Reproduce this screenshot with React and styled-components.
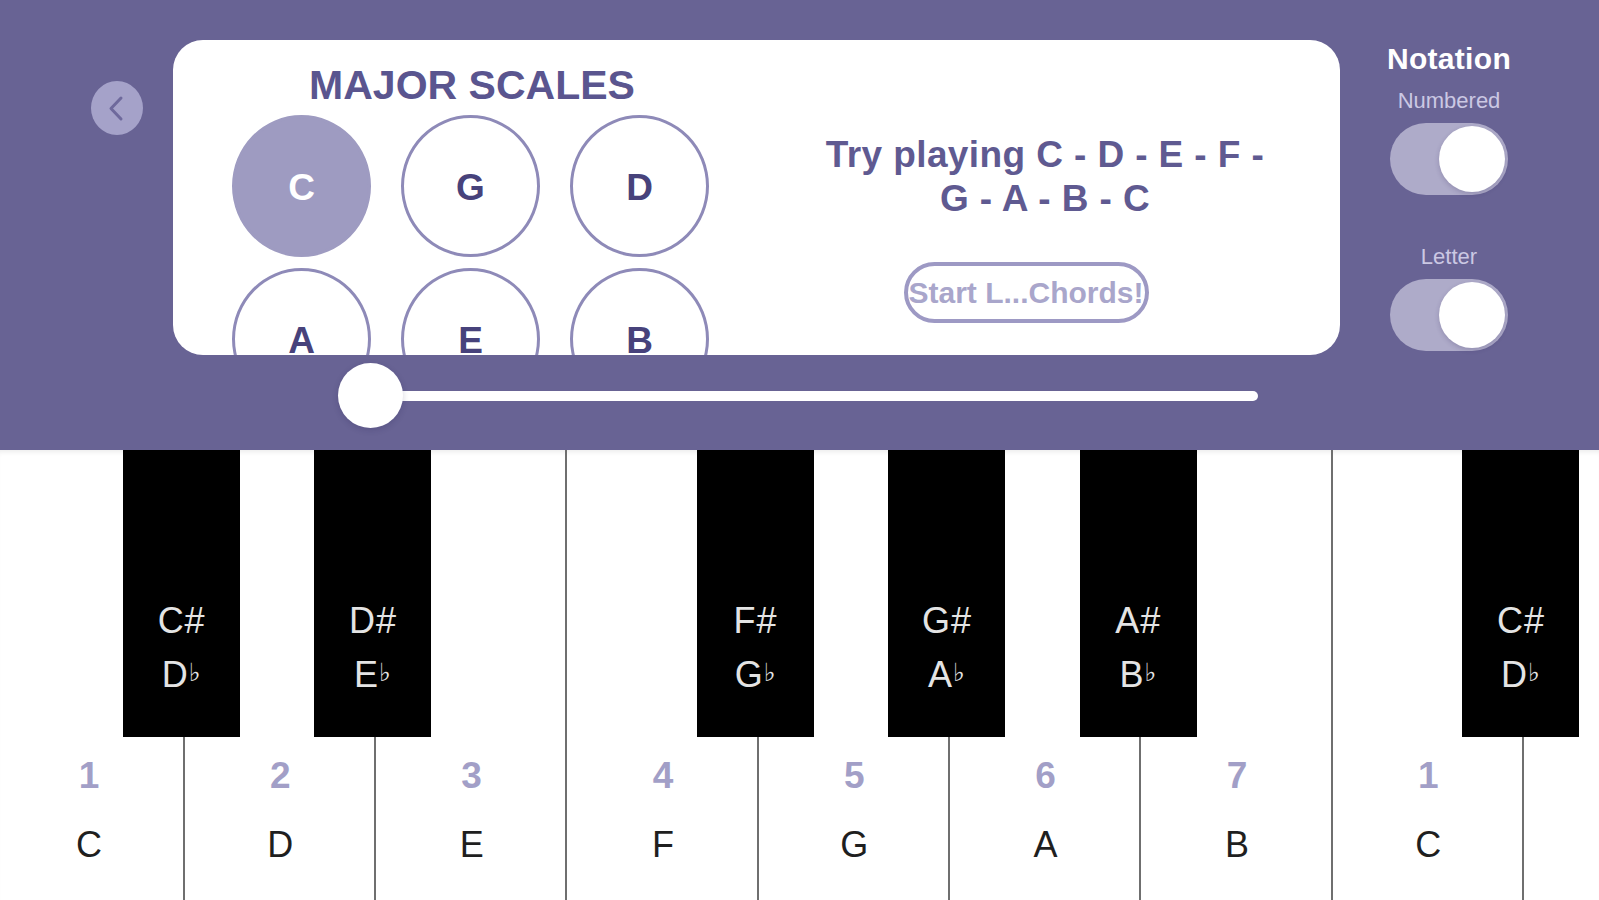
import React from "react";
import styled, { createGlobalStyle } from "styled-components";

const GlobalStyle = createGlobalStyle`
  html, body { margin: 0; padding: 0; }
  body {
    width: 1599px;
    height: 900px;
    overflow: hidden;
    font-family: "Liberation Sans", Arial, sans-serif;
    background: #ffffff;
  }
  * { box-sizing: border-box; }
`;

const Page = styled.div`
  width: 1599px;
  height: 900px;
  display: flex;
  flex-direction: column;
`;

const Header = styled.header`
  height: 450px;
  flex: 0 0 450px;
  background: #686394;
  display: flex;
  flex-direction: column;
`;

const TopRow = styled.div`
  display: flex;
  align-items: flex-start;
  padding-top: 40px;
`;

const LeftRail = styled.div`
  width: 173px;
  flex: 0 0 173px;
  padding: 41px 0 0 91px;
`;

const BackButton = styled.button`
  width: 52px;
  height: 54px;
  border-radius: 50%;
  border: none;
  padding: 0;
  background: #a5a2c9;
  display: flex;
  align-items: center;
  justify-content: center;
`;

const Card = styled.section`
  width: 1167px;
  height: 315px;
  flex: 0 0 1167px;
  background: #ffffff;
  border-radius: 30px;
  overflow: hidden;
  display: flex;
`;

const ScalesPane = styled.div`
  width: 539px;
  flex: 0 0 539px;
  padding: 22px 0 0 59px;
  display: flex;
  flex-direction: column;
  align-items: flex-start;
`;

const ScalesTitle = styled.h1`
  width: 480px;
  margin: 0;
  text-align: center;
  font-size: 41px;
  line-height: 46px;
  font-weight: 700;
  color: #5a558f;
`;

const ScaleGrid = styled.div`
  margin-top: 7px;
  display: grid;
  grid-template-columns: repeat(3, 139px);
  column-gap: 30px;
  row-gap: 11px;
`;

const ScaleCircle = styled.div`
  width: 139px;
  height: 142px;
  border-radius: 50%;
  border: 3px solid ${(p) => (p.$active ? "#9e9bc1" : "#8e8ab8")};
  background: ${(p) => (p.$active ? "#9e9bc1" : "#ffffff")};
  color: ${(p) => (p.$active ? "#ffffff" : "#47427b")};
  display: flex;
  align-items: center;
  justify-content: center;
  padding-top: 3px;
  font-size: 37px;
  font-weight: 700;
`;

const PracticePane = styled.div`
  flex: 1;
  display: flex;
  flex-direction: column;
  align-items: center;
  padding-top: 93px;
`;

const PracticeText = styled.p`
  margin: 0;
  padding-left: 38px;
  max-width: 500px;
  text-align: center;
  font-size: 37px;
  line-height: 44px;
  font-weight: 700;
  letter-spacing: 0.4px;
  color: #5f5a91;
`;

const ChordButton = styled.button`
  margin-top: 41px;
  width: 245px;
  height: 61px;
  border-radius: 31px;
  border: 4px solid #9d99c4;
  background: #ffffff;
  padding: 0;
  display: flex;
  align-items: center;
  justify-content: center;
  overflow: visible;
  white-space: nowrap;
  font-family: "Liberation Sans", Arial, sans-serif;
  font-size: 30px;
  font-weight: 700;
  color: #a9a6cb;
`;

const NotationRail = styled.aside`
  margin-left: 39px;
  width: 140px;
  padding-top: 2px;
  display: flex;
  flex-direction: column;
  align-items: center;
`;

const NotationTitle = styled.div`
  font-size: 30px;
  line-height: 33px;
  font-weight: 700;
  color: #ffffff;
  letter-spacing: 0.3px;
`;

const ToggleLabel = styled.div`
  margin-top: ${(p) => p.$gap}px;
  font-size: 22px;
  line-height: 24px;
  font-weight: 400;
  color: #cbc8e3;
`;

const Toggle = styled.div`
  margin-top: 10px;
  width: 118px;
  height: 72px;
  border-radius: 36px;
  background: #aeabc9;
  padding: 3px;
  display: flex;
  justify-content: flex-end;
  align-items: center;
`;

const Knob = styled.div`
  width: 66px;
  height: 66px;
  border-radius: 50%;
  background: #ffffff;
  box-shadow: 0 2px 5px rgba(40, 30, 80, 0.2);
`;

const SliderRow = styled.div`
  margin-top: 8px;
  padding-left: 338px;
  display: flex;
  align-items: center;
  height: 65px;
`;

const Thumb = styled.div`
  width: 65px;
  height: 65px;
  flex: 0 0 65px;
  border-radius: 50%;
  background: #ffffff;
  position: relative;
  z-index: 1;
  box-shadow: 0 2px 6px rgba(30, 20, 70, 0.18);
`;

const Track = styled.div`
  width: 895px;
  height: 10px;
  margin-left: -40px;
  border-radius: 5px;
  background: #ffffff;
`;

const Piano = styled.div`
  height: 450px;
  flex: 0 0 450px;
  overflow: hidden;
  background: #ffffff;
  box-shadow: inset 0 5px 5px -3px rgba(0, 0, 0, 0.08);
`;

const KeyRow = styled.div`
  display: flex;
  height: 100%;
  margin-left: -6.7px;
`;

const WhiteKey = styled.div`
  position: relative;
  flex: 0 0 191.33px;
  height: 100%;
  border-right: 2px solid #6f6f6f;
  display: flex;
  flex-direction: column;
  align-items: center;
  justify-content: flex-end;
  padding: 0 0 35px 2px;
`;

const Degree = styled.div`
  font-size: 37px;
  line-height: 41px;
  font-weight: 700;
  color: #a29fc7;
`;

const NoteName = styled.div`
  margin-top: 28px;
  font-size: 36px;
  line-height: 41px;
  color: #1f1f1f;
`;

const BlackKey = styled.div`
  position: absolute;
  top: 0;
  right: -57.5px;
  width: 117px;
  height: 287px;
  background: #000000;
  z-index: 2;
  display: flex;
  flex-direction: column;
  align-items: center;
  justify-content: flex-end;
  padding-bottom: 36px;
  color: #e4e4e4;
  font-size: 36px;
  line-height: 52px;
  letter-spacing: 1px;
`;

const Flat = styled.span`
  font-family: "DejaVu Sans", sans-serif;
  font-size: 25px;
  vertical-align: 6px;
`;

const scales = ["C", "G", "D", "A", "E", "B"];

const keys = [
  { deg: "1", name: "C", sharp: "C#", flat: "D" },
  { deg: "2", name: "D", sharp: "D#", flat: "E" },
  { deg: "3", name: "E" },
  { deg: "4", name: "F", sharp: "F#", flat: "G" },
  { deg: "5", name: "G", sharp: "G#", flat: "A" },
  { deg: "6", name: "A", sharp: "A#", flat: "B" },
  { deg: "7", name: "B" },
  { deg: "1", name: "C", sharp: "C#", flat: "D" },
  { deg: "2", name: "D", sharp: "D#", flat: "E" },
];

export default function App() {
  return (
    <>
      <GlobalStyle />
      <Page>
        <Header>
          <TopRow>
            <LeftRail>
              <BackButton aria-label="Back">
                <svg width="52" height="54" viewBox="0 0 52 54">
                  <polyline
                    points="30,17 20,27.5 30,38"
                    fill="none"
                    stroke="#6e699c"
                    strokeWidth="3"
                    strokeLinecap="round"
                    strokeLinejoin="round"
                  />
                </svg>
              </BackButton>
            </LeftRail>
            <Card>
              <ScalesPane>
                <ScalesTitle>MAJOR SCALES</ScalesTitle>
                <ScaleGrid>
                  {scales.map((s, i) => (
                    <ScaleCircle key={s} $active={i === 0}>
                      {s}
                    </ScaleCircle>
                  ))}
                </ScaleGrid>
              </ScalesPane>
              <PracticePane>
                <PracticeText>Try playing C - D - E - F - G - A - B - C</PracticeText>
                <ChordButton>Start L...Chords!</ChordButton>
              </PracticePane>
            </Card>
            <NotationRail>
              <NotationTitle>Notation</NotationTitle>
              <ToggleLabel $gap={14}>Numbered</ToggleLabel>
              <Toggle>
                <Knob />
              </Toggle>
              <ToggleLabel $gap={50}>Letter</ToggleLabel>
              <Toggle>
                <Knob />
              </Toggle>
            </NotationRail>
          </TopRow>
          <SliderRow>
            <Thumb />
            <Track />
          </SliderRow>
        </Header>
        <Piano>
          <KeyRow>
            {keys.map((k, i) => (
              <WhiteKey key={i}>
                <Degree>{k.deg}</Degree>
                <NoteName>{k.name}</NoteName>
                {k.sharp && (
                  <BlackKey>
                    <div>{k.sharp}</div>
                    <div>
                      {k.flat}
                      <Flat>♭</Flat>
                    </div>
                  </BlackKey>
                )}
              </WhiteKey>
            ))}
          </KeyRow>
        </Piano>
      </Page>
    </>
  );
}
